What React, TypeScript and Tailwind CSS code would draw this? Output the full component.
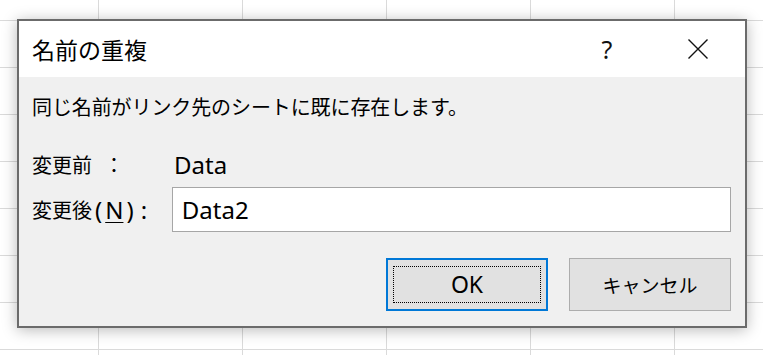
import { useState } from "react";

const App = () => {
    const [name, setName] = useState("Data2");

    return (
        <div
            className="w-[763px] h-[355px] overflow-hidden bg-white bg-[linear-gradient(to_right,#dadada_1px,transparent_1px),linear-gradient(to_bottom,#dadada_1px,transparent_1px)] bg-[size:144px_47px] bg-[position:98px_20px] pt-[19px] pl-[17px]"
            style={{ fontFamily: '"Noto Sans", "Noto Sans CJK JP", sans-serif' }}
        >
            <div className="w-[730px] h-[309px] border-2 border-[#6b6b6b] bg-[#f0f0f0] flex flex-col shadow-[0_2px_14px_rgba(0,0,0,0.28)] text-black">
                {/* title bar */}
                <div className="h-[56px] bg-white flex items-center pl-[13px] pr-[24px]">
                    <h1 className="text-[23px] leading-none" style={{ fontFamily: '"Noto Sans CJK JP", sans-serif' }}>名前の重複</h1>
                    <div className="ml-auto flex items-center gap-[45px]">
                        <button className="w-[46px] h-[40px] flex items-center justify-center text-[25px] leading-none text-[#111]">?</button>
                        <button className="w-[46px] h-[40px] flex items-center justify-center">
                            <svg width="20" height="20" viewBox="0 0 20 20" fill="none" stroke="#111" strokeWidth="1.4">
                                <path d="M0.5 0.5 L19.5 19.5 M19.5 0.5 L0.5 19.5" />
                            </svg>
                        </button>
                    </div>
                </div>

                {/* body */}
                <div className="flex flex-col pl-[13px] pr-[14px]">
                    <p className="mt-[17px] h-[26px] flex items-center text-[20px] leading-none tracking-[-0.1px]" style={{ fontFamily: '"Noto Sans CJK JP", sans-serif' }}>
                        同じ名前がリンク先のシートに既に存在します。
                    </p>

                    <div className="mt-[32px] h-[26px] flex items-center">
                        <div className="w-[140px] text-[20px] leading-none flex items-center" style={{ fontFamily: '"Noto Sans CJK JP", sans-serif' }}>
                            変更前<span className="ml-[12px]">：</span>
                        </div>
                        <div className="pl-[2px] text-[24px] leading-none">Data</div>
                    </div>

                    <div className="mt-[9px] h-[45px] flex items-center">
                        <label htmlFor="newname" className="w-[140px] flex items-center leading-none">
                            <span className="text-[20px]" style={{ fontFamily: '"Noto Sans CJK JP", sans-serif' }}>変更後</span>
                            <span className="text-[24px] ml-[3px]">(<span className="mx-[3px] underline underline-offset-[3px] decoration-1">N</span>)<span className="ml-[7px]">:</span></span>
                        </label>
                        <input
                            id="newname"
                            value={name}
                            onChange={(e) => setName(e.target.value)}
                            className="w-[560px] h-[45px] border border-[#a6a6a6] bg-white pl-[9px] text-[24px] outline-none"
                        />
                    </div>

                    <div className="mt-[26px] flex justify-end gap-[21px]">
                        <button className="w-[162px] h-[53px] border-2 border-[#0078d7] bg-[#e1e1e1] px-[5px] py-[6px]">
                            <div className="h-full border border-dotted border-black flex items-center justify-center text-[23px] leading-none">OK</div>
                        </button>
                        <button className="w-[162px] h-[53px] border border-[#adadad] bg-[#e1e1e1] flex items-center justify-center text-[19px] leading-none" style={{ fontFamily: '"Noto Sans CJK JP", sans-serif' }}>
                            キャンセル
                        </button>
                    </div>
                </div>
            </div>
        </div>
    )
}

export default App;
